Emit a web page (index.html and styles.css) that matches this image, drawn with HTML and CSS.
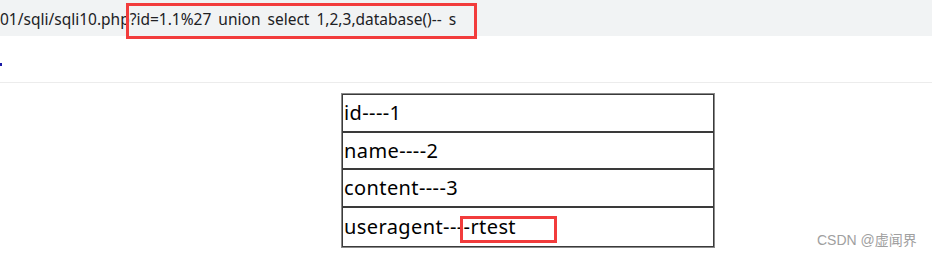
FILE: index.html
```html
<!DOCTYPE html>
<html>
<head>
<meta charset="utf-8">
<link rel="stylesheet" href="styles.css">
</head>
<body>
<div class="urlbar">
  <span class="url">01/sqli/sqli10.php?id=1.1%27 union select 1,2,3,database()-- s</span>
  <div class="mark mark-url"></div>
</div>
<div class="toolbar"><span class="dot"></span></div>
<div class="content">
  <table class="result">
    <tr><td>id----1</td></tr>
    <tr><td class="r2">name----2</td></tr>
    <tr><td>content----3</td></tr>
    <tr><td class="last">useragent----rtest<div class="mark mark-ua"></div></td></tr>
  </table>
</div>
<div class="watermark">CSDN @虚闻界</div>
</body>
</html>
```
FILE: styles.css
```css
html, body {
  margin: 0;
  padding: 0;
  background: #fff;
  width: 932px;
  height: 254px;
  overflow: hidden;
  position: relative;
}
.urlbar {
  position: relative;
  height: 36px;
  background: #f1f3f4;
  display: flex;
  align-items: center;
}
.url {
  font-family: "Noto Sans", "Noto Sans CJK SC", sans-serif;
  font-size: 15.5px;
  word-spacing: 3px;
  color: #202124;
  white-space: pre;
  padding-top: 2px;
}
.mark {
  position: absolute;
  border: 3px solid #f23c3c;
  box-sizing: border-box;
}
.mark-url {
  left: 126px;
  top: 3px;
  width: 351px;
  height: 36px;
}
.toolbar {
  height: 46px;
  border-bottom: 1px solid #ececec;
  position: relative;
}
.dot {
  position: absolute;
  left: 0;
  top: 27px;
  width: 2px;
  height: 3px;
  background: #1a1aa6;
}
.content {
  padding: 10px 0 0 341px;
}
.result {
  border-collapse: separate;
  border-spacing: 0;
  border: 1px solid #8a8a8a;
  width: 374px;
}
.result td {
  border: 1px solid #3a3a3a;
  height: 38px;
  padding: 0 0 0 1px;
  box-sizing: border-box;
  font-family: "Noto Sans", "Noto Sans CJK SC", sans-serif;
  font-size: 20px;
  letter-spacing: 0.4px;
  color: #000;
  line-height: 24px;
  vertical-align: middle;
  position: relative;
}
.result td.r2 { height: 37px; }
.result td.last { height: 40px; }
.mark-ua {
  left: 117px;
  top: 8px;
  width: 97px;
  height: 27px;
}
.watermark {
  position: absolute;
  left: 817px;
  top: 229px;
  font-family: "Liberation Sans", "Noto Sans CJK SC", sans-serif;
  font-size: 14px;
  color: #a0a0a0;
}
```
